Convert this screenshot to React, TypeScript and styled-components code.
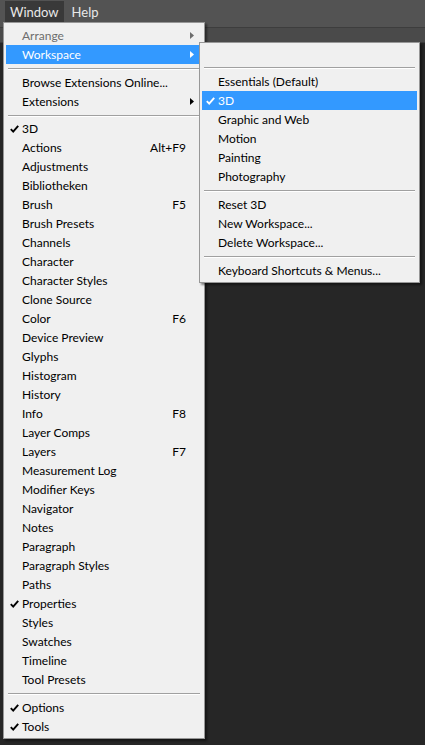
import React from "react";
import styled, { createGlobalStyle } from "styled-components";

const Global = createGlobalStyle`
  html, body { margin: 0; padding: 0; background: #262626; }
  body { font-family: Lato, "Noto Sans", sans-serif; }
`;

const Page = styled.div`
  position: relative;
  width: 425px;
  height: 745px;
  overflow: hidden;
  background: #262626;
  display: flex;
  flex-direction: column;
`;

const MenuBar = styled.div`
  height: 28px;
  background: #535353;
  border-bottom: 1px solid #3d3d3d;
  display: flex;
  align-items: flex-start;
  padding: 1px 0 0 5px;
  gap: 3px;
  box-sizing: border-box;
`;

const MenuTitle = styled.div<{ $active?: boolean }>`
  height: 21px;
  padding: 0 5px;
  display: flex;
  align-items: center;
  font-size: 13px;
  color: #e8e8e8;
  background: ${(p) => (p.$active ? "#393939" : "transparent")};
`;

const ToolStrip = styled.div`
  height: 14px;
  background: #4a4a4a;
  border-bottom: 1px solid #3a3a3a;
`;

const Menu = styled.div<{ $left: number; $top: number; $width: number; $padTop: number }>`
  position: absolute;
  left: ${(p) => p.$left}px;
  top: ${(p) => p.$top}px;
  width: ${(p) => p.$width}px;
  box-sizing: border-box;
  background: #f0f0f0;
  border: 1px solid #979797;
  padding: ${(p) => p.$padTop}px 2px 2px 2px;
  box-shadow: 2px 2px 2px rgba(0, 0, 0, 0.45);
  display: flex;
  flex-direction: column;
`;

const Row = styled.div<{ $hl?: boolean; $disabled?: boolean; $indent: number }>`
  height: 19px;
  display: flex;
  align-items: center;
  position: relative;
  padding-left: ${(p) => p.$indent}px;
  padding-right: 16px;
  font-size: 12px;
  color: ${(p) => (p.$hl ? "#ffffff" : p.$disabled ? "#6d6d6d" : "#000000")};
  background: ${(p) => (p.$hl ? "#3399ff" : "transparent")};
  white-space: nowrap;
`;

const Label = styled.span`
  flex: 1;
`;

const Shortcut = styled.span``;

const Check = styled.svg`
  position: absolute;
  left: 4px;
  top: 6px;
`;

const Arrow = styled.svg`
  position: absolute;
  right: 8px;
  top: 6px;
`;

const Separator = styled.div`
  height: 9px;
  display: flex;
  align-items: center;
  padding: 0 2px;
  &::before {
    content: "";
    flex: 1;
    height: 1px;
    background: #a0a0a0;
    box-shadow: 0 1px 0 #ffffff;
  }
`;

const Sep8 = styled(Separator)`
  height: 8px;
`;

type Item = {
  label?: string;
  sep?: boolean;
  sep8?: boolean;
  check?: boolean;
  hl?: boolean;
  disabled?: boolean;
  arrow?: boolean;
  shortcut?: string;
};

const CheckMark = ({ color }: { color: string }) => (
  <Check width="9" height="8" viewBox="0 0 9 8">
    <path d="M0.8 4.2 L3.2 6.6 L8.2 0.8" fill="none" stroke={color} strokeWidth="1.9" />
  </Check>
);

const ArrowMark = ({ color }: { color: string }) => (
  <Arrow width="4" height="7" viewBox="0 0 4 7">
    <path d="M0 0 L4 3.5 L0 7 Z" fill={color} />
  </Arrow>
);

const MenuList = ({ items, indent }: { items: Item[]; indent: number }) => (
  <>
    {items.map((it, i) => {
      if (it.sep) return <Separator key={i} />;
      if (it.sep8) return <Sep8 key={i} />;
      const color = it.hl ? "#ffffff" : it.disabled ? "#6d6d6d" : "#000000";
      return (
        <Row key={i} $hl={it.hl} $disabled={it.disabled} $indent={indent}>
          {it.check && <CheckMark color={it.hl ? "#ffffff" : "#000000"} />}
          <Label>{it.label}</Label>
          {it.shortcut && <Shortcut>{it.shortcut}</Shortcut>}
          {it.arrow && <ArrowMark color={color} />}
        </Row>
      );
    })}
  </>
);

const mainItems: Item[] = [
  { label: "Arrange", disabled: true, arrow: true },
  { label: "Workspace", hl: true, arrow: true },
  { sep: true },
  { label: "Browse Extensions Online..." },
  { label: "Extensions", arrow: true },
  { sep8: true },
  { label: "3D", check: true },
  { label: "Actions", shortcut: "Alt+F9" },
  { label: "Adjustments" },
  { label: "Bibliotheken" },
  { label: "Brush", shortcut: "F5" },
  { label: "Brush Presets" },
  { label: "Channels" },
  { label: "Character" },
  { label: "Character Styles" },
  { label: "Clone Source" },
  { label: "Color", shortcut: "F6" },
  { label: "Device Preview" },
  { label: "Glyphs" },
  { label: "Histogram" },
  { label: "History" },
  { label: "Info", shortcut: "F8" },
  { label: "Layer Comps" },
  { label: "Layers", shortcut: "F7" },
  { label: "Measurement Log" },
  { label: "Modifier Keys" },
  { label: "Navigator" },
  { label: "Notes" },
  { label: "Paragraph" },
  { label: "Paragraph Styles" },
  { label: "Paths" },
  { label: "Properties", check: true },
  { label: "Styles" },
  { label: "Swatches" },
  { label: "Timeline" },
  { label: "Tool Presets" },
  { sep: true },
  { label: "Options", check: true },
  { label: "Tools", check: true },
];

const subItems: Item[] = [
  { label: "" },
  { sep: true },
  { label: "Essentials (Default)" },
  { label: "3D", check: true, hl: true },
  { label: "Graphic and Web" },
  { label: "Motion" },
  { label: "Painting" },
  { label: "Photography" },
  { sep: true },
  { label: "Reset 3D" },
  { label: "New Workspace..." },
  { label: "Delete Workspace..." },
  { sep: true },
  { label: "Keyboard Shortcuts & Menus..." },
];

export default function App() {
  return (
    <Page>
      <Global />
      <MenuBar>
        <MenuTitle $active>Window</MenuTitle>
        <MenuTitle>Help</MenuTitle>
      </MenuBar>
      <ToolStrip />
      <Menu $left={3} $top={22} $width={202} $padTop={3}>
        <MenuList items={mainItems} indent={16} />
      </Menu>
      <Menu $left={199} $top={42} $width={221} $padTop={1}>
        <MenuList items={subItems} indent={16} />
      </Menu>
    </Page>
  );
}
